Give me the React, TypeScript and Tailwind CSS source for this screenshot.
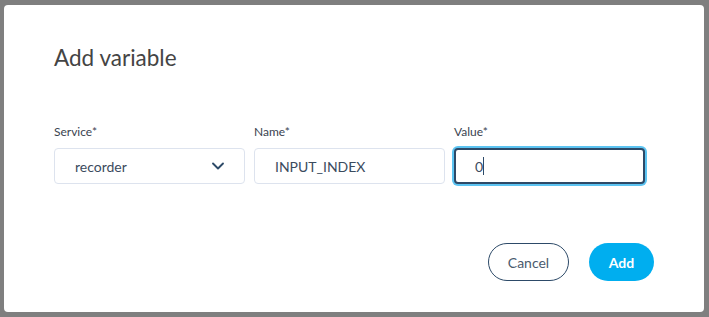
import { ChevronDown } from 'lucide-react'

const font = { fontFamily: 'Lato, "Open Sans", sans-serif' }

function Field({ label, children, focused }: { label: string; children: React.ReactNode; focused?: boolean }) {
  return (
    <div className="w-[191px] flex flex-col">
      <label className="text-[12px] leading-4 text-[#3a4350] mb-[8px]">{label}</label>
      <div
        className={`h-9 rounded-[4px] bg-white flex items-center pl-[20px] pr-4 text-[14px] text-[#3b4b5e] ${
          focused ? 'border-2 border-[#2d4a68] shadow-[0_0_0_2px_#5cc4f2]' : 'border border-[#dde3ee]'
        }`}
      >
        {children}
      </div>
    </div>
  )
}

export default function App() {
  return (
    <div className="w-[709px] h-[317px] bg-[#7f7f7f] pt-[5px] pl-1" style={font}>
      <div className="w-[700px] h-[307px] bg-white rounded-[4px] pt-[39px] px-[50px] pb-[31px] flex flex-col">
        <h2 className="text-[22.5px] leading-7 text-[#444] font-normal">Add variable</h2>
        <div className="flex gap-[9px] mt-[52px]">
          <Field label="Service*">
            <span className="flex-1">recorder</span>
            <ChevronDown className="w-5 h-5 text-[#2d4a68]" strokeWidth={2.25} />
          </Field>
          <Field label="Name*">
            <span>INPUT_INDEX</span>
          </Field>
          <Field label="Value*" focused>
            <span className="-ml-[1px]">0</span>
            <span className="w-px h-[18px] bg-[#2d4a68]" />
          </Field>
        </div>
        <div className="mt-auto flex justify-end gap-5">
          <button className="w-[81px] h-[38px] rounded-full border border-[#2d4a68] text-[14px] text-[#4a5a6e] bg-white">
            Cancel
          </button>
          <button className="w-[65px] h-[38px] rounded-full bg-[#00aeef] text-white text-[14px] font-bold">
            Add
          </button>
        </div>
      </div>
    </div>
  )
}
